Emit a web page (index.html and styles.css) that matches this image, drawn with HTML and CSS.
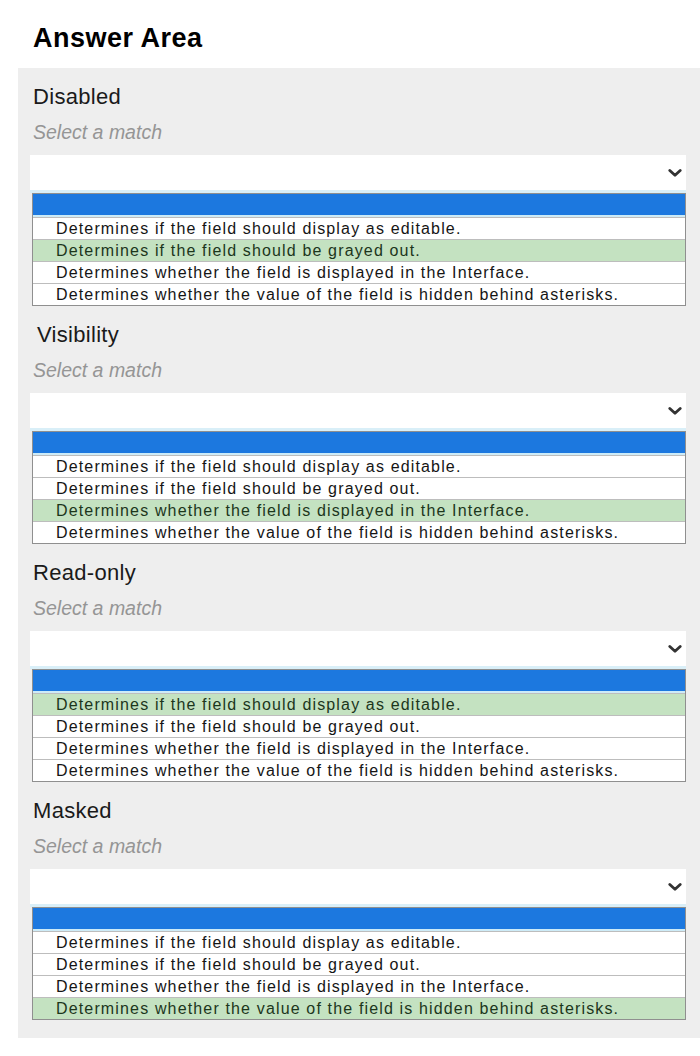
FILE: index.html
```html
<!DOCTYPE html>
<html lang="en">
<head>
<meta charset="utf-8">
<title>Answer Area</title>
<link rel="stylesheet" href="styles.css">
</head>
<body>
<h1 class="title">Answer Area</h1>
<div class="panel">
  <section class="item">
    <div class="label">Disabled</div>
    <div class="hint">Select a match</div>
    <div class="select"><svg class="chev" width="14" height="8" viewBox="0 0 14 8"><path d="M1.8 1.5 L7 6.2 L12.2 1.5" fill="none" stroke="#333" stroke-width="2.8" stroke-linecap="round" stroke-linejoin="round"/></svg></div>
    <div class="list">
      <div class="hl"></div>
      <div class="strip"></div>
      <div class="opt">Determines if the field should display as editable.</div>
      <div class="opt sel">Determines if the field should be grayed out.</div>
      <div class="opt">Determines whether the field is displayed in the Interface.</div>
      <div class="opt">Determines whether the value of the field is hidden behind asterisks.</div>
    </div>
  </section>
  <section class="item">
    <div class="label label-indent">Visibility</div>
    <div class="hint">Select a match</div>
    <div class="select"><svg class="chev" width="14" height="8" viewBox="0 0 14 8"><path d="M1.8 1.5 L7 6.2 L12.2 1.5" fill="none" stroke="#333" stroke-width="2.8" stroke-linecap="round" stroke-linejoin="round"/></svg></div>
    <div class="list">
      <div class="hl"></div>
      <div class="strip"></div>
      <div class="opt">Determines if the field should display as editable.</div>
      <div class="opt">Determines if the field should be grayed out.</div>
      <div class="opt sel">Determines whether the field is displayed in the Interface.</div>
      <div class="opt">Determines whether the value of the field is hidden behind asterisks.</div>
    </div>
  </section>
  <section class="item">
    <div class="label">Read-only</div>
    <div class="hint">Select a match</div>
    <div class="select"><svg class="chev" width="14" height="8" viewBox="0 0 14 8"><path d="M1.8 1.5 L7 6.2 L12.2 1.5" fill="none" stroke="#333" stroke-width="2.8" stroke-linecap="round" stroke-linejoin="round"/></svg></div>
    <div class="list">
      <div class="hl"></div>
      <div class="strip"></div>
      <div class="opt sel">Determines if the field should display as editable.</div>
      <div class="opt">Determines if the field should be grayed out.</div>
      <div class="opt">Determines whether the field is displayed in the Interface.</div>
      <div class="opt">Determines whether the value of the field is hidden behind asterisks.</div>
    </div>
  </section>
  <section class="item">
    <div class="label">Masked</div>
    <div class="hint">Select a match</div>
    <div class="select"><svg class="chev" width="14" height="8" viewBox="0 0 14 8"><path d="M1.8 1.5 L7 6.2 L12.2 1.5" fill="none" stroke="#333" stroke-width="2.8" stroke-linecap="round" stroke-linejoin="round"/></svg></div>
    <div class="list">
      <div class="hl"></div>
      <div class="strip"></div>
      <div class="opt">Determines if the field should display as editable.</div>
      <div class="opt">Determines if the field should be grayed out.</div>
      <div class="opt">Determines whether the field is displayed in the Interface.</div>
      <div class="opt sel">Determines whether the value of the field is hidden behind asterisks.</div>
    </div>
  </section>
</div>
</body>
</html>
```
FILE: styles.css
```css
* { box-sizing: border-box; }
html, body {
  margin: 0;
  padding: 0;
  background: #ffffff;
  font-family: "Liberation Sans", Arial, sans-serif;
  color: #111;
}
.title {
  margin: 22px 0 14px 0;
  padding-left: 33px;
  font-size: 27px;
  line-height: 32px;
  font-weight: bold;
  color: #000;
  letter-spacing: 0.5px;
}
.panel {
  margin-left: 18px;
  width: 682px;
  background: #eeeeee;
  padding: 16px 14px 18px 12px;
  display: flex;
  flex-direction: column;
  gap: 16px;
}
.item {
  display: flex;
  flex-direction: column;
}
.label {
  font-size: 22px;
  line-height: 26px;
  color: #1a1a1a;
  padding-left: 3px;
  letter-spacing: 0.3px;
  margin-bottom: 10px;
}
.label-indent { padding-left: 7px; }
.hint {
  font-size: 19.5px;
  line-height: 24px;
  font-style: italic;
  color: #959595;
  padding-left: 3px;
  margin-bottom: 11px;
}
.select {
  height: 38px;
  background: #ffffff;
  border-bottom: 3px solid #d9eff8;
  display: flex;
  align-items: center;
  justify-content: flex-end;
  padding-right: 4px;
  padding-top: 1px;
}
.chev { display: block; }
.list {
  margin-left: 2px;
  border: 1px solid #8f8f8f;
  background: #ffffff;
  display: flex;
  flex-direction: column;
}
.hl {
  height: 21px;
  background: #1c78df;
}
.strip {
  height: 2px;
  background: #cdebf7;
}
.opt {
  height: 22px;
  line-height: 21px;
  border-top: 1px solid #bdbdbd;
  padding-left: 23px;
  font-size: 16px;
  letter-spacing: 1.15px;
  color: #151515;
  white-space: nowrap;
  background: #ffffff;
}
.opt.sel {
  background: #c4e2c1;
  color: #1c361c;
}
```
